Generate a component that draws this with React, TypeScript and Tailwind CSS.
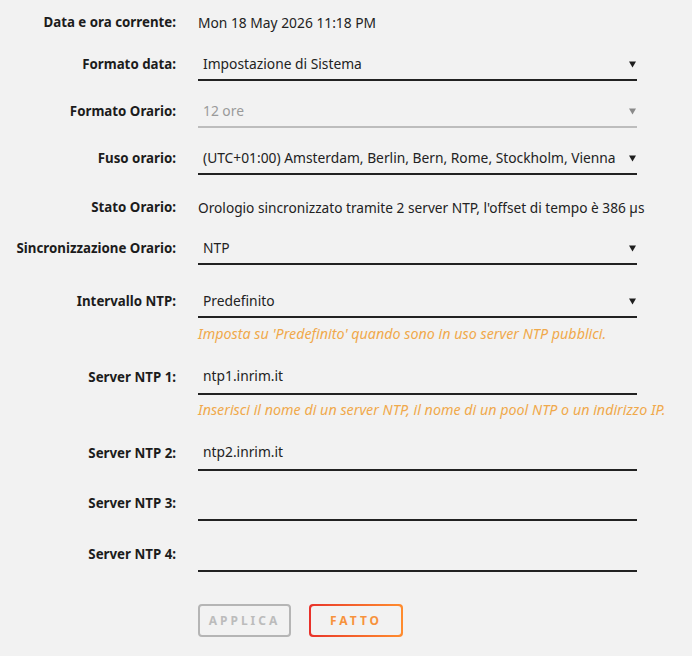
import React from "react";

const Arrow = ({ gray }: { gray?: boolean }) => (
  <svg width="7" height="7" viewBox="0 0 7 7" className="shrink-0">
    <path d="M0 0.5 H7 L3.5 6.5 Z" fill={gray ? "#8a8a8a" : "#1e1e1e"} />
  </svg>
);

const Label = ({ children }: { children: React.ReactNode }) => (
  <div className="w-[176px] shrink-0 text-right font-bold text-[13.3px] text-[#1c1c1c] whitespace-nowrap">{children}</div>
);

const SelectRow = ({
  label,
  value,
  gray,
  className,
}: {
  label: string;
  value: string;
  gray?: boolean;
  className?: string;
}) => (
  <div className={`flex items-center ${className ?? ""}`}>
    <Label>{label}</Label>
    <div
      className={`ml-[22px] w-[439px] h-[32px] flex items-center justify-between pl-[5px] pr-[1px] border-b-2 ${
        gray ? "border-[#bdbdbd] text-[#9a9a9a]" : "border-[#222] text-[#222]"
      }`}
    >
      <span className="text-[13.8px] whitespace-nowrap">{value}</span>
      <Arrow gray={gray} />
    </div>
  </div>
);

const InputRow = ({ label, value, className }: { label: string; value: string; className?: string }) => (
  <div className={`flex items-center ${className ?? ""}`}>
    <Label>{label}</Label>
    <div className="ml-[22px] w-[439px] h-[35px] flex items-center pl-[5px] border-b-2 border-[#222] text-[13.8px] text-[#222]">
      {value}
    </div>
  </div>
);

const Hint = ({ children, className }: { children: React.ReactNode; className?: string }) => (
  <div className={`pl-[198px] h-[16px] flex items-center text-[14.3px] italic text-[#f0a94b] whitespace-nowrap ${className ?? ""}`}>
    {children}
  </div>
);

export default function App() {
  return (
    <div
      className="w-[692px] h-[656px] bg-[#f2f2f2] pt-[11px] text-[#222]"
      style={{ fontFamily: '"Noto Sans", "Open Sans", sans-serif' }}
    >
      <div className="flex items-center h-[24px]">
        <Label>Data e ora corrente:</Label>
        <div className="ml-[22px] text-[13.8px]">Mon 18 May 2026 11:18 PM</div>
      </div>
      <SelectRow className="mt-[14px]" label="Formato data:" value="Impostazione di Sistema" />
      <SelectRow className="mt-[15px]" label="Formato Orario:" value="12 ore" gray />
      <SelectRow
        className="mt-[15px]"
        label="Fuso orario:"
        value="(UTC+01:00) Amsterdam, Berlin, Bern, Rome, Stockholm, Vienna"
      />
      <div className="flex items-center h-[24px] mt-[21px]">
        <Label>Stato Orario:</Label>
        <div className="ml-[22px] text-[13.7px] whitespace-nowrap">
          Orologio sincronizzato tramite 2 server NTP, l'offset di tempo è 386 µs
        </div>
      </div>
      <SelectRow className="mt-[13px]" label="Sincronizzazione Orario:" value="NTP" />
      <SelectRow className="mt-[21px]" label="Intervallo NTP:" value="Predefinito" />
      <Hint className="mt-[8px]">Imposta su 'Predefinito' quando sono in uso server NTP pubblici.</Hint>
      <InputRow className="mt-[18px]" label="Server NTP 1:" value="ntp1.inrim.it" />
      <Hint className="mt-[7px]">Inserisci il nome di un server NTP, il nome di un pool NTP o un indirizzo IP.</Hint>
      <InputRow className="mt-[18px]" label="Server NTP 2:" value="ntp2.inrim.it" />
      <InputRow className="mt-[15px]" label="Server NTP 3:" value="" />
      <InputRow className="mt-[16px]" label="Server NTP 4:" value="" />
      <div className="flex ml-[198px] mt-[32px] gap-[18px]">
        <button className="w-[93px] h-[33px] rounded-[4px] border-2 border-[#b5b5b5] text-[#bcbcbc] text-[12px] font-bold tracking-[3px] flex items-center justify-center">
          APPLICA
        </button>
        <div className="w-[94px] h-[33px] rounded-[4px] p-[2px] bg-gradient-to-r from-[#e8302a] to-[#ff8c2e]">
          <div className="w-full h-full rounded-[3px] bg-[#f2f2f2] flex items-center justify-center">
            <span className="text-[12px] font-bold tracking-[3px] text-[#f7923d]">FATTO</span>
          </div>
        </div>
      </div>
    </div>
  );
}
